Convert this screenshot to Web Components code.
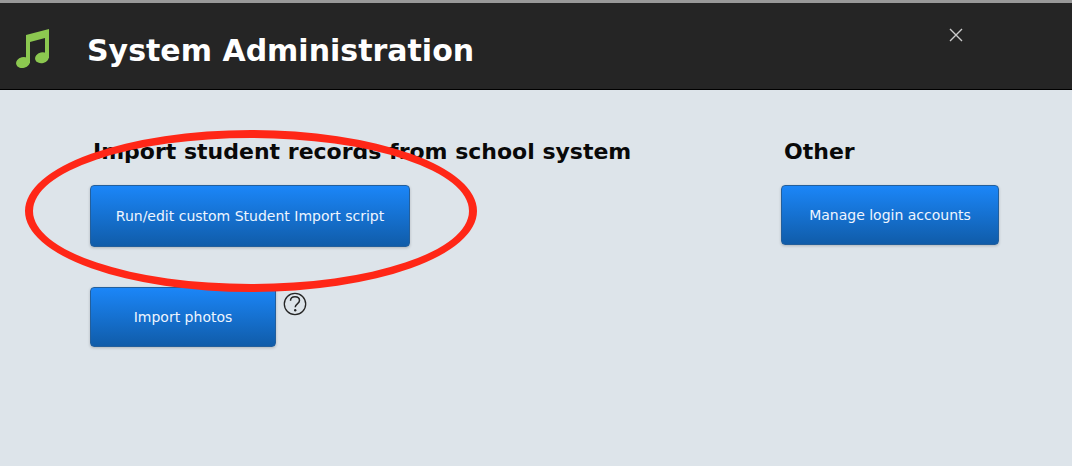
<!DOCTYPE html>
<html lang="en">
<head>
<meta charset="utf-8">
<meta name="viewport" content="width=device-width, initial-scale=1">
<title>System Administration</title>
<style>
body {
    margin: 0;
    min-height: 100vh;
    background: #dde4ea;
    color: #090909;
    font-family: "DejaVu Sans", Verdana, sans-serif;
}
</style>
</head>
<body>
<admin-header>System Administration</admin-header>
<admin-panels>
    <admin-section>
        <span slot="heading">Import student records from school system</span>
        <highlight-ring>
            <action-button style="--button-width: 320px; --button-height: 62px">Run/edit custom Student Import script</action-button>
        </highlight-ring>
        <help-row>
            <action-button style="--button-width: 186px; --button-height: 60px">Import photos</action-button>
        </help-row>
    </admin-section>
    <admin-section>
        <span slot="heading">Other</span>
        <action-button style="--button-width: 218px; --button-height: 60px">Manage login accounts</action-button>
    </admin-section>
</admin-panels>

<script>
class BaseElement extends HTMLElement {
    constructor() {
        super();
        this.attachShadow({mode: 'open'});
        const child = document.createElement('template');
        child.innerHTML = this.template;
        this.shadowRoot.appendChild(child.content.cloneNode(true));
    }
}

window.customElements.define('admin-header',
    class extends BaseElement {
        get template() {
            return `
        <style>
        :host {
            display: block;
            background: #252525;
            border-top: 3px solid #999;
            border-bottom: 1px solid #000;
        }
        header {
            display: flex;
            align-items: center;
            padding: 0 108px 0 16px;
        }
        .logo {
            width: 34px;
            height: 40px;
            flex: none;
            margin-top: 6px;
        }
        h1 {
            flex: 1;
            margin: 0 0 0 37px;
            padding: 30px 0 20px;
            color: #fff;
            font-size: 30px;
            line-height: 36px;
        }
        button {
            display: flex;
            align-self: flex-start;
            margin-top: 24px;
            padding: 0;
            border: 0;
            background: none;
            cursor: pointer;
        }
        </style>
        <header>
        <svg class="logo" viewBox="0 0 34 40" aria-hidden="true">
            <g fill="#8cc850">
                <ellipse cx="7" cy="33.500" rx="7" ry="5.400" transform="rotate(-14 7 33.500)"/>
                <ellipse cx="26" cy="28.700" rx="7" ry="5.400" transform="rotate(-14 26 28.700)"/>
                <path d="M10 6 33 0v29h-4V9L14 13V34h-4z"/>
            </g>
        </svg>
        <h1><slot></slot></h1>
        <button type="button" aria-label="Close">
            <svg width="16" height="16" viewBox="0 0 16 16" aria-hidden="true">
                <path d="M2 2 14 14M14 2 2 14" stroke="#ccc" stroke-width="1.400" fill="none"/>
            </svg>
        </button>
        </header>`;
        }
    }
);

window.customElements.define('admin-panels',
    class extends BaseElement {
        get template() {
            return `
        <style>
        :host {
            display: block;
        }
        main {
            display: grid;
            grid-template-columns: 691fr 291fr;
            padding: 47px 0 40px 90px;
        }
        </style>
        <main><slot></slot></main>`;
        }
    }
);

window.customElements.define('admin-section',
    class extends BaseElement {
        get template() {
            return `
        <style>
        :host {
            display: block;
        }
        h2 {
            margin: 0 0 18px;
            padding-left: 3px;
            font-size: 22px;
            line-height: 30px;
        }
        .actions {
            display: flex;
            flex-direction: column;
            align-items: flex-start;
            gap: 40px;
        }
        </style>
        <section>
        <h2><slot name="heading"></slot></h2>
        <div class="actions"><slot></slot></div>
        </section>`;
        }
    }
);

window.customElements.define('action-button',
    class extends BaseElement {
        get template() {
            return `
        <style>
        :host {
            display: block;
        }
        button {
            display: block;
            min-width: var(--button-width, 186px);
            min-height: var(--button-height, 60px);
            padding: 0 20px;
            border: 1px solid #235f9c;
            border-radius: 4px;
            background: linear-gradient(#1b86f8, #105ca9);
            box-shadow: 0 1px 3px rgba(0, 0, 0, 0.2);
            color: #eef5ff;
            font: 14px/20px "DejaVu Sans", Verdana, sans-serif;
            cursor: pointer;
        }
        </style>
        <button type="button"><slot></slot></button>`;
        }
    }
);

// red ring drawn round the slotted control
window.customElements.define('highlight-ring',
    class extends BaseElement {
        get template() {
            return `
        <style>
        :host {
            display: block;
            position: relative;
        }
        .ring {
            position: absolute;
            z-index: 1;
            inset: -55px -67px -45px -65px;
            border: 8px solid #ff2717;
            border-radius: 50%;
            pointer-events: none;
        }
        </style>
        <slot></slot>
        <div class="ring"></div>`;
        }
    }
);

window.customElements.define('help-row',
    class extends BaseElement {
        get template() {
            return `
        <style>
        :host {
            display: flex;
            align-items: flex-start;
            gap: 7px;
        }
        button {
            display: flex;
            margin-top: 5px;
            padding: 0;
            border: 0;
            background: none;
            cursor: pointer;
        }
        </style>
        <slot></slot>
        <button type="button" aria-label="Help">
            <svg width="24" height="24" viewBox="0 0 24 24" fill="none" stroke="#252525" aria-hidden="true">
                <circle cx="12" cy="12" r="10.700" stroke-width="1.300"/>
                <path d="M7.500 8.800C7.500 6.200 9.400 4.800 12 4.800s4.500 1.400 4.500 3.800c0 3.200-4.300 3.400-4.300 6.600" stroke-width="1.500"/>
                <circle cx="12.200" cy="18.200" r="1.200" fill="#252525" stroke="none"/>
            </svg>
        </button>`;
        }
    }
);
</script>
</body>
</html>
